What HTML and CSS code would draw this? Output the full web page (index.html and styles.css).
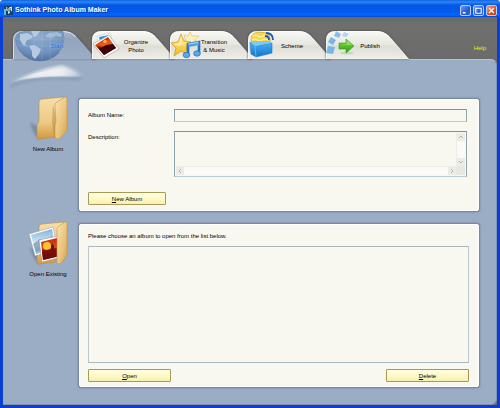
FILE: index.html
```html
<!DOCTYPE html>
<html lang="en">
<head>
    <meta charset="UTF-8">
    <title>Sothink Photo Album Maker</title>
    <link rel="stylesheet" href="styles.css">
</head>
<body>
    <div class="window">
        <header class="titlebar">
            <svg class="app-icon" viewBox="0 0 9 9">
                <rect width="9" height="9" rx="1" fill="#153f68"/>
                <path d="M0 3h4v2H2v4H0z" fill="#60b9d3"/>
                <path d="M2 1l2 1-2 1zM6 3l2-2v5M4 5l2 2-2 1z" fill="#b8eff2"/>
                <path d="M5 2v5M5 2l3-1" stroke="#e8ffff" stroke-width="1" fill="none"/>
            </svg>
            <h1 class="title">Sothink Photo Album Maker</h1>
            <button class="win-btn" aria-label="Minimize">
                <svg viewBox="0 0 10 10"><path d="M2 7.5h3" stroke="#fff" stroke-width="1.6"/></svg>
            </button>
            <button class="win-btn" aria-label="Maximize">
                <svg viewBox="0 0 10 10"><path d="M2 2.5h6M2 2v6h6V2" stroke="#fff" stroke-width="1.2" fill="none"/></svg>
            </button>
            <button class="win-btn close" aria-label="Close">
                <svg viewBox="0 0 10 10"><path d="M2.3 2.3l5.4 5.4M7.7 2.3L2.3 7.7" stroke="#fff" stroke-width="1.5"/></svg>
            </button>
        </header>

        <!-- gradients shared by the icons -->
        <svg class="defs" aria-hidden="true">
            <defs>
                <linearGradient id="tabFill" x1="0" y1="0" x2="0" y2="1">
                    <stop offset="0" stop-color="#f8f8f4"/>
                    <stop offset=".45" stop-color="#e9e9e3"/>
                    <stop offset=".55" stop-color="#deded6"/>
                    <stop offset="1" stop-color="#efefea"/>
                </linearGradient>
                <linearGradient id="activeFill" x1="0" y1="0" x2="0" y2="1">
                    <stop offset="0" stop-color="#a9b7ca"/>
                    <stop offset=".3" stop-color="#93a5be"/>
                    <stop offset="1" stop-color="#9badc4"/>
                </linearGradient>
                <radialGradient id="globeFill" cx=".5" cy=".2" r=".8">
                    <stop offset="0" stop-color="#8fabcf"/>
                    <stop offset=".65" stop-color="#6f91be"/>
                    <stop offset="1" stop-color="#506f9d"/>
                </radialGradient>
                <linearGradient id="folderBack" x1="0" y1="0" x2="0" y2="1">
                    <stop offset="0" stop-color="#f6dfaa"/>
                    <stop offset=".6" stop-color="#edc983"/>
                    <stop offset="1" stop-color="#d2993f"/>
                </linearGradient>
                <linearGradient id="folderFront" x1="0" y1="0" x2="1" y2="1">
                    <stop offset="0" stop-color="#f9e5b4"/>
                    <stop offset=".6" stop-color="#e9c27a"/>
                    <stop offset="1" stop-color="#d6a04a"/>
                </linearGradient>
                <linearGradient id="sunset" x1="0" y1="0" x2="0" y2="1">
                    <stop offset="0" stop-color="#c82d08"/>
                    <stop offset=".45" stop-color="#e04a10"/>
                    <stop offset=".6" stop-color="#7c0f08"/>
                    <stop offset="1" stop-color="#320308"/>
                </linearGradient>
                <linearGradient id="sky" x1="0" y1="0" x2="0" y2="1">
                    <stop offset="0" stop-color="#7db4dc"/>
                    <stop offset=".6" stop-color="#dcebf2"/>
                    <stop offset="1" stop-color="#8fb0be"/>
                </linearGradient>
                <linearGradient id="starFill" x1="0" y1="0" x2="0" y2="1">
                    <stop offset="0" stop-color="#fff099"/>
                    <stop offset="1" stop-color="#f2bb1c"/>
                </linearGradient>
                <linearGradient id="boxFill" x1="0" y1="0" x2="0" y2="1">
                    <stop offset="0" stop-color="#49b3f2"/>
                    <stop offset="1" stop-color="#1174cf"/>
                </linearGradient>
                <linearGradient id="arrowFill" x1="0" y1="0" x2="0" y2="1">
                    <stop offset="0" stop-color="#8be545"/>
                    <stop offset="1" stop-color="#259a11"/>
                </linearGradient>
                <linearGradient id="swooshFill" x1="0" y1="0" x2="1" y2="0">
                    <stop offset="0" stop-color="#fff" stop-opacity=".1"/>
                    <stop offset=".3" stop-color="#fff" stop-opacity=".5"/>
                    <stop offset=".65" stop-color="#f0f1f2" stop-opacity=".8"/>
                    <stop offset="1" stop-color="#fff" stop-opacity="0"/>
                </linearGradient>
                <filter id="soft" x="-20%" y="-40%" width="140%" height="180%"><feGaussianBlur stdDeviation="1.2"/></filter>
                <symbol id="tabShape" viewBox="0 0 83 28">
                    <path d="M0 28V9Q0 0 10 0H51Q58 0 63 5Q68 10 83 28z"/>
                    <path d="M.5 28V9Q.5 .5 10 .5H51Q58 .5 63 5.500" fill="none" stroke="#fff" stroke-opacity=".6"/>
                </symbol>
            </defs>
        </svg>

        <div class="client">
        <div class="toolbar">
            <nav class="tabs">
                <button class="tab active">
                    <svg class="tab-bg"><use href="#tabShape"/></svg>
                    <svg class="globe" viewBox="0 0 56 31">
                        <path d="M1 9Q1 1 10 0H49Q51 4 50 11Q47 25 34 29Q24 32 15 28Q3 22 1 9z" fill="url(#globeFill)"/>
                        <g fill="#b5c9df">
                            <path d="M6 3L13 2L19 5L17 8L13 9L11 13L14 15L9 14L6 9z"/>
                            <path d="M15 15L20 14L27 18L25 23L21 28L18 25L18 20z"/>
                            <path d="M17 0h9l-3 5l-3 1z"/>
                            <path d="M31 5l4-3l8-1l5 2l-1 3l-5-1l-4 2l-5-1z" opacity=".7"/>
                        </g>
                        <path d="M20 1v27M28 0v30M36 0v28M2 8h48M3 15h46" stroke="#c9dbec" stroke-width=".4" opacity=".5"/>
                    </svg>
                    <svg class="swoosh" viewBox="0 0 80 26">
                        <path d="M2 21Q26 9 76 12L70 17Q30 12 2 24z" fill="#6e86a6" opacity=".35" filter="url(#soft)"/>
                        <path d="M1 18Q28 5 54 1Q68 4 78 13Q34 10 1 18z" fill="url(#swooshFill)" filter="url(#soft)"/>
                        <path d="M3 18Q28 7 56 4Q68 7 74 13Q34 10 3 18z" fill="url(#swooshFill)"/>
                    </svg>
                    <span class="tab-label">Start</span>
                </button>
                <button class="tab">
                    <svg class="tab-bg"><use href="#tabShape"/></svg>
                    <svg class="tab-icon" viewBox="0 0 28 28">
                        <path d="M5 5L18 2L22 15L8 18z" fill="#fff" stroke="#bbb" stroke-width=".5"/>
                        <path d="M7 6L17 4L19 11L9 14z" fill="#2f8cd8"/>
                        <path d="M1 13L17 4L27 18L12 27z" fill="#fff" stroke="#999" stroke-width=".6"/>
                        <path d="M3 14L16 6L24 17L12 24z" fill="url(#sunset)"/>
                        <path d="M6 14l6-4l6-1l3 4l-8 4z" fill="#ee6519" opacity=".65"/>
                        <circle cx="13" cy="10.500" r="1.800" fill="#ffb32e"/>
                        <path d="M7 18l7-4l7-1l3 4l-12 7z" fill="#3f0307"/>
                    </svg>
                    <span class="tab-label">Organize<br>Photo</span>
                </button>
                <button class="tab">
                    <svg class="tab-bg"><use href="#tabShape"/></svg>
                    <svg class="tab-icon wide" viewBox="0 0 31 28">
                        <path d="M14 4L18 5L20 1L22 5L29 5L25 9L27 13L21 12L17 14z" fill="#fbefc0" stroke="#e2bc64" stroke-width=".6"/>
                        <path d="M11 3L14 10L21 11L16 16L19 24L11 20L4 25L6 17L1 12L8 11z" fill="url(#starFill)" stroke="#d69b1e" stroke-width=".8" stroke-linejoin="round"/>
                        <path d="M11 6L12 12L17 12L9 15L4 13L9 12z" fill="#fff8c5" opacity=".7"/>
                        <path d="M18 24V13L29 11V22" fill="none" stroke="#2474c6" stroke-width="2.600"/>
                        <path d="M18 14L29 12" stroke="#4c9de3" stroke-width="4"/>
                        <ellipse cx="16.500" cy="24" rx="3.300" ry="2.700" fill="#57aaf0" stroke="#1d68b8" stroke-width=".7"/>
                        <ellipse cx="27" cy="22.500" rx="3.300" ry="2.700" fill="#57aaf0" stroke="#1d68b8" stroke-width=".7"/>
                        <path d="M19 13L28 11.500" stroke="#b2dafb" stroke-width="1"/>
                    </svg>
                    <span class="tab-label">Transition<br>&amp; Music</span>
                </button>
                <button class="tab">
                    <svg class="tab-bg"><use href="#tabShape"/></svg>
                    <svg class="tab-icon" viewBox="0 0 28 28">
                        <path d="M3 7Q4 2 10 1L20 2Q23 6 22 13L4 14z" fill="#f7d54e" stroke="#c69b2b" stroke-width=".6"/>
                        <path d="M5 5q3-2 5 0t5 0t5 1M4 9q3-2 5 0t5 0t7 0" fill="none" stroke="#fff3a8" stroke-width="1.200"/>
                        <path d="M2 11L7 15L24 12L24 22L8 26L3 23z" fill="url(#boxFill)" stroke="#1668b4" stroke-width=".5"/>
                        <path d="M2 11L7 15L24 12L22 10L5 10z" fill="#77cdf8"/>
                        <path d="M7 15L8 26" stroke="#73c6fb" stroke-width=".7"/>
                        <path d="M18 2Q25 2 25 9M17 5Q21 5 21 9" fill="none" stroke="#1b5cb4" stroke-width="1.800"/>
                    </svg>
                    <span class="tab-label">Scheme</span>
                </button>
                <button class="tab">
                    <svg class="tab-bg"><use href="#tabShape"/></svg>
                    <svg class="tab-icon" viewBox="0 0 28 28">
                        <g fill="#79b4ea">
                            <path d="M2 15L9 16L7 23L0 22z"/>
                            <path d="M5 6L10 9L7 14L2 11z"/>
                            <path d="M10 0L15 3L13 7L8 5z" opacity=".85"/>
                            <path d="M18 1L23 3L20 6L16 5z" opacity=".5"/>
                        </g>
                        <ellipse cx="21" cy="22" rx="7" ry="1.500" fill="#b8c4ac" opacity=".6"/>
                        <path d="M13 12H20V8L28 15L20 22V18H13z" fill="url(#arrowFill)" stroke="#3a981f" stroke-width=".6"/>
                        <path d="M14 13H21V10L26 14z" fill="#b4f386" opacity=".6"/>
                    </svg>
                    <span class="tab-label">Publish</span>
                </button>
            </nav>
            <a class="help" href="#">Help</a>
        </div>

        <main class="content">
            <section class="row">
                <div class="side">
                    <svg class="folder" viewBox="0 0 40 46">
                        <path d="M2 26L12 32V44Q4 38 2 26z" fill="#64799a" opacity=".6" filter="url(#soft)"/>
                        <path d="M11 6Q11 3 14 3L36 1L27 41L11 43Q8 42 9 39V29L11 25z" fill="url(#folderBack)" stroke="#b98b43" stroke-width=".6"/>
                        <path d="M25 9L24 26L26 42L30 30z" fill="#a87930" opacity=".4"/>
                        <path d="M27 9Q27 7 29 6L37 1Q39 0 39 3V34Q38 36 31 43Q28 44 27 41V29L28 26z" fill="url(#folderFront)" stroke="#c1954d" stroke-width=".6"/>
                    </svg>
                    <span>New Album</span>
                </div>
                <form class="panel new-album">
                    <label for="albumName">Album Name:</label>
                    <input type="text" id="albumName" class="field">
                    <label for="description">Description:</label>
                    <div class="field memo">
                        <textarea id="description"></textarea>
                        <div class="scroll vertical">
                            <svg class="arrow" viewBox="0 0 8 8"><path d="M2 5l2-2l2 2"/></svg>
                            <svg class="arrow" viewBox="0 0 8 8"><path d="M2 3l2 2l2-2"/></svg>
                        </div>
                        <div class="scroll">
                            <svg class="arrow" viewBox="0 0 8 8"><path d="M5 2l-2 2l2 2"/></svg>
                            <svg class="arrow" viewBox="0 0 8 8"><path d="M3 2l2 2l-2 2"/></svg>
                        </div>
                        <div class="corner"></div>
                    </div>
                    <button type="button" class="btn create"><u>N</u>ew Album</button>
                </form>
            </section>

            <section class="row grow">
                <div class="side">
                    <svg class="folder" viewBox="0 0 40 46">
                        <path d="M2 26L12 32V44Q4 38 2 26z" fill="#64799a" opacity=".6" filter="url(#soft)"/>
                        <path d="M11 6Q11 3 14 3L36 1L27 41L11 43Q8 42 9 39V29L11 25z" fill="url(#folderBack)" stroke="#b98b43" stroke-width=".6"/>
                        <path d="M1 13L25 6L30 28L7 35z" fill="#fff" stroke="#8897a5" stroke-width=".5"/>
                        <path d="M3 14L24 8L28 27L8 33z" fill="url(#sky)"/>
                        <path d="M5 23L12 18L17 20L24 15L27 25L8 31z" fill="#6e97b4" opacity=".7"/>
                        <path d="M11 19L30 15L34 36L14 41z" fill="#fff" stroke="#9a8877" stroke-width=".5"/>
                        <path d="M13 21L29 17L32 35L15 39z" fill="url(#sunset)"/>
                        <circle cx="19" cy="25" r="4" fill="#ffc22b"/>
                        <path d="M14 30l17-4l1 9l-17 4z" fill="#7b1208" opacity=".75"/>
                        <path d="M24 22l2 3v6h-3v-6z" fill="#69120a"/>
                        <path d="M29 9Q29 6 31 5L37 1Q39 0 39 3V34Q38 36 32 43Q29 44 29 41V29z" fill="url(#folderFront)" stroke="#c1954d" stroke-width=".6"/>
                    </svg>
                    <span>Open Existing</span>
                </div>
                <form class="panel open-album">
                    <label for="albumList">Please choose an album to open from the list below.</label>
                    <select id="albumList" class="album-list" size="8"></select>
                    <div class="actions">
                        <button type="button" class="btn"><u>O</u>pen</button>
                        <button type="button" class="btn"><u>D</u>elete</button>
                    </div>
                </form>
            </section>
        </main>
        </div>
    </div>
</body>
</html>
```

FILE: styles.css
```css
* {
    box-sizing: border-box;
}
body {
    margin: 0;
    background-color: #e8ecf4;
    font-family: "Liberation Sans", Arial, sans-serif;
    font-size: 6px;
    line-height: 8px;
    color: #000;
}
button, input, textarea, select {
    font: inherit;
    color: inherit;
    margin: 0;
    padding: 0;
    border-radius: 0;
}
svg {
    display: block;
}
.defs {
    position: absolute;
    width: 0;
    height: 0;
}
.window {
    display: flex;
    flex-direction: column;
    min-height: 100vh;
    padding: 0 3px 3px;
    background-color: #0a3fd2;
    border-radius: 4px 4px 0 0;
    overflow: hidden;
}
.client {
    flex: 1;
    display: flex;
    flex-direction: column;
    background-color: #6a6b6a;
}

/* Title bar */
.titlebar {
    display: flex;
    align-items: center;
    gap: 2px;
    height: 17px;
    margin: 0 -3px;
    padding: 3px 3px 0 4px;
    background: linear-gradient(#1464dc 0, #2b86fa 2px, #0557e2 5px, #0459ec 11px, #0466fb 15px, #0347cc 17px);
}
.app-icon {
    width: 9px;
    height: 9px;
}
.title {
    flex: 1;
    margin: 0;
    font-size: 7px;
    font-weight: bold;
    color: #fff;
    text-shadow: 1px 1px #0a3a9c;
}
.win-btn {
    width: 11px;
    height: 11px;
    border: 1px solid #b9cdf8;
    border-radius: 2px;
    background: linear-gradient(135deg, #6f9af5, #2458d8 60%, #2a63e6);
}
.win-btn.close {
    background: linear-gradient(135deg, #f09a80, #dc4a22 60%, #c83c18);
}
.win-btn svg {
    width: 9px;
    height: 9px;
}

/* Tabs */
.toolbar {
    display: flex;
    justify-content: space-between;
    align-items: flex-end;
    height: 42px;
    padding: 0 11px 0 10px;
    background: linear-gradient(#676a6a, #6f706e 8px, #6a6b6a);
}
.tabs {
    display: flex;
}
.tab {
    position: relative;
    width: 83px;
    height: 28px;
    border: none;
    background: none;
}
.tab + .tab {
    margin-left: -5px;
}
.tab-bg {
    position: absolute;
    left: 0;
    top: 0;
    width: 83px;
    height: 28px;
    fill: url(#tabFill);
    filter: drop-shadow(0 0 1px #444);
}
.tab-icon {
    position: absolute;
    left: 0;
    top: 0;
    width: 28px;
    height: 28px;
}
.tab-icon.wide {
    width: 31px;
}
.tab-label {
    position: relative;
    display: block;
    width: 88px;
    padding-top: 2px;
    text-align: center;
}
.tab.active {
    width: 84px;
    color: #0a6be6;
}
.tab.active .tab-bg {
    fill: url(#activeFill);
}
.tab.active .tab-label {
    text-shadow: 0 0 2px #b9dcff;
}
.globe {
    position: absolute;
    left: 1px;
    top: 0;
    width: 56px;
    height: 31px;
    z-index: 1;
}
.tab.active .tab-label {
    z-index: 2;
}
.swoosh {
    position: absolute;
    left: -5px;
    top: 33px;
    width: 80px;
    height: 26px;
    z-index: 1;
}
.help {
    color: #ecec10;
    text-decoration: none;
    padding-bottom: 7px;
}

/* Page body */
.content {
    flex: 1;
    display: flex;
    flex-direction: column;
    gap: 13px;
    padding: 39px 17px 17px 0;
    background-color: #9badc4;
    border-top: 1px solid #b7c4d5;
    border-right: 1px solid #7f92ae;
    border-bottom: 1px solid #7f92ae;
    border-radius: 0 6px 6px 0;
}
.row {
    display: flex;
}
.row.grow {
    flex: 1;
}
.side {
    width: 76px;
    display: flex;
    flex-direction: column;
    align-items: center;
    gap: 3px;
    padding-left: 14px;
}
.folder {
    width: 40px;
    height: 46px;
    margin-top: -3px;
}
.panel {
    flex: 1;
    background-color: #f8f8f0;
    border: 1px solid #fff;
    border-radius: 2px;
    box-shadow: 0 0 2px 1px #6d7b93;
}
.new-album {
    display: grid;
    grid-template-columns: 86px 1fr;
    row-gap: 9px;
    padding: 9px 11px 5px 8px;
}
.new-album label {
    padding-top: 2px;
}
.field {
    width: 100%;
    height: 13px;
    background-color: #f8f8f0;
    border: 1px solid;
    border-color: #7f909c #8fa3ad #bccdd4 #8fa3ad;
}
.memo {
    display: grid;
    grid-template-columns: 1fr 9px;
    grid-template-rows: 1fr 9px;
    height: 46px;
    padding: 1px;
}
.memo textarea {
    min-width: 0;
    width: 100%;
    border: none;
    background: none;
    resize: none;
    overflow: hidden;
}
.scroll {
    display: flex;
    justify-content: space-between;
    background-color: #fafaf6;
    border-top: 1px solid #eeeee6;
}
.scroll.vertical {
    flex-direction: column;
    border-top: none;
    border-left: 1px solid #eeeee6;
}
.arrow {
    width: 8px;
    height: 8px;
    background-color: #ecece6;
    fill: none;
    stroke: #b4b4ac;
}
.corner {
    background-color: #e8e8e2;
}
.btn {
    width: 83px;
    height: 13px;
    border: 1px solid #a59a58;
    border-radius: 1px;
    background: linear-gradient(#fffde0, #fdf8c4 60%, #f6efae);
}
.btn.create {
    width: 78px;
    margin-top: 6px;
}
.open-album {
    display: flex;
    flex-direction: column;
    padding: 7px 9px 4px 8px;
}
.album-list {
    flex: 1;
    width: 100%;
    margin: 6px 0;
    background-color: #f8f8f0;
    border: 1px solid;
    border-color: #a9b7bf #b9c6cc #a9b7bf #b9c6cc;
    overflow: hidden;
}
.actions {
    display: flex;
    justify-content: space-between;
}
```
